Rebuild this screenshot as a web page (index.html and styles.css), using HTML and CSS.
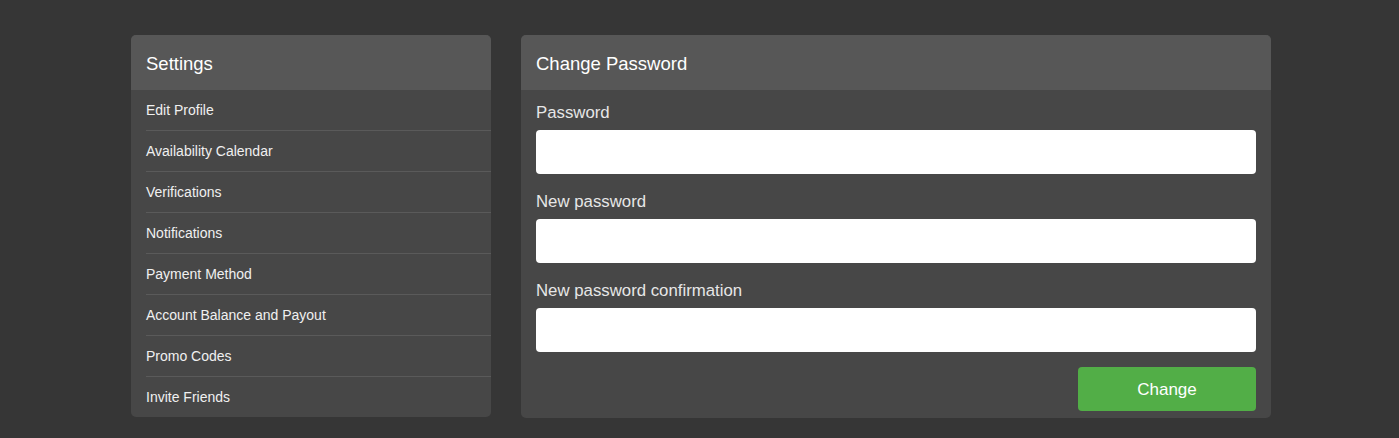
FILE: index.html
```html
<!DOCTYPE html>
<html>
<head>
<meta charset="utf-8">
<link rel="stylesheet" href="styles.css">
</head>
<body>
<div class="page">
  <div class="container">
    <aside class="panel side">
      <div class="panel-head">Settings</div>
      <ul class="menu">
        <li>Edit Profile</li>
        <li>Availability Calendar</li>
        <li>Verifications</li>
        <li>Notifications</li>
        <li>Payment Method</li>
        <li>Account Balance and Payout</li>
        <li>Promo Codes</li>
        <li>Invite Friends</li>
      </ul>
    </aside>
    <section class="panel main">
      <div class="panel-head">Change Password</div>
      <form class="form">
        <label class="label">Password</label>
        <input class="input" type="password">
        <label class="label">New password</label>
        <input class="input" type="password">
        <label class="label">New password confirmation</label>
        <input class="input" type="password">
        <div class="actions"><button type="button" class="btn">Change</button></div>
      </form>
    </section>
  </div>
</div>
</body>
</html>
```
FILE: styles.css
```css
html, body {
  margin: 0;
  padding: 0;
  background: #363636;
  font-family: "Liberation Sans", Arial, sans-serif;
  height: 100%;
}
.page {
  display: flex;
  justify-content: center;
  padding: 35px 0 0 3px;
}
.container {
  width: 1140px;
  display: flex;
  gap: 30px;
  align-items: flex-start;
}
.panel {
  background: #474747;
  border-radius: 5px;
  overflow: hidden;
}
.side { width: 360px; }
.main { width: 750px; height: 383px; }
.panel-head {
  background: #575757;
  height: 55px;
  display: flex;
  align-items: center;
  padding: 2px 15px 0;
  box-sizing: border-box;
  color: #fff;
  font-size: 18.5px;
}
.menu {
  list-style: none;
  margin: 0;
  padding: 0 0 0 15px;
}
.menu li {
  height: 40px;
  display: flex;
  align-items: center;
  color: #f0f0f0;
  font-size: 14px;
  border-bottom: 1px solid #5a5a5a;
}
.menu li:last-child { border-bottom: none; }
.form {
  padding: 0 15px;
  display: flex;
  flex-direction: column;
}
.label {
  height: 45px;
  display: flex;
  align-items: flex-end;
  padding-bottom: 8px;
  box-sizing: border-box;
  color: #e6e6e6;
  font-size: 16.8px;
  line-height: 18px;
}
.form .label:first-child { height: 40px; }
.input {
  height: 44px;
  border: none;
  border-radius: 4px;
  background: #fff;
  margin: 0;
  padding: 0 12px;
  box-sizing: border-box;
}
.actions {
  display: flex;
  justify-content: flex-end;
  margin-top: 15px;
}
.btn {
  width: 178px;
  height: 44px;
  border: none;
  border-radius: 4px;
  background: #52ae47;
  color: #fff;
  font-family: "Liberation Sans", Arial, sans-serif;
  font-size: 17px;
  padding-top: 2px;
}
```
